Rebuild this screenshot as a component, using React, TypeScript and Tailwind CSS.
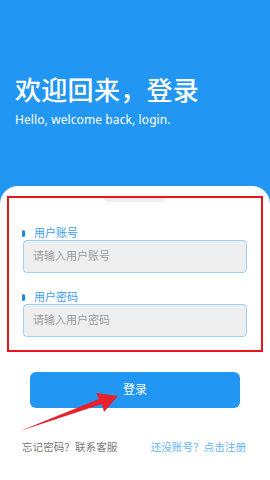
export default function App() {
  return (
    <div
      className="relative w-[270px] h-[480px] bg-[#2196f3] flex flex-col overflow-hidden"
      style={{ fontFamily: '"Noto Sans", "Noto Sans CJK SC", sans-serif' }}
    >
      {/* header */}
      <div className="h-[186px] shrink-0 pt-[77px] px-[15px] text-white">
        <h1 className="text-[26px] leading-[26px] font-medium tracking-[0.3px]">欢迎回来，登录</h1>
        <p className="mt-[9px] text-[12px] leading-[15px] tracking-[0.1px]">Hello, welcome back, login.</p>
      </div>

      {/* card */}
      <div className="relative flex-1 bg-white rounded-t-[18px] pt-[10px] flex flex-col">
        <div className="absolute top-[11px] left-[105px] w-[60px] h-[5px] bg-[#eeeeee] rounded-b-[4px]" />

        <div className="relative mx-[7px] border-2 border-[#e8141c] pt-[28px] pb-[13px] px-[14px]">
          <div className="flex items-center h-[14px]">
            <span className="w-[3px] h-[7px] rounded-full bg-[#1e88e5] ml-[-1px]" />
            <span className="ml-[9px] text-[11px] leading-[14px] text-[#3d9cf2]">用户账号</span>
          </div>
          <div className="h-[33px] rounded-[4px] border border-[#9fd0fa] bg-[#eeeeee] flex items-center px-[9px]">
            <span className="text-[11px] text-[#9e9e9e]">请输入用户账号</span>
          </div>

          <div className="flex items-center h-[14px] mt-[17px]">
            <span className="w-[3px] h-[7px] rounded-full bg-[#1e88e5] ml-[-1px]" />
            <span className="ml-[9px] text-[11px] leading-[14px] text-[#3d9cf2]">用户密码</span>
          </div>
          <div className="h-[33px] rounded-[4px] border border-[#9fd0fa] bg-[#eeeeee] flex items-center px-[9px]">
            <span className="text-[11px] text-[#9e9e9e]">请输入用户密码</span>
          </div>
        </div>

        <div className="mt-[20px] mx-[30px] h-[36px] rounded-[6px] bg-[#2196f3] flex items-center justify-center">
          <span className="text-[12px] text-white">登录</span>
        </div>

        <div className="mt-[32px] pl-[22px] pr-[24px] flex justify-between text-[10.6px] leading-[14px]">
          <span className="text-[#7a7a7a]">忘记密码？联系客服</span>
          <span className="text-[#64b5f6]">还没账号？点击注册</span>
        </div>
      </div>

      {/* annotation arrow */}
      <svg className="absolute left-0 top-0 pointer-events-none" width="270" height="480" viewBox="0 0 270 480">
        <polygon
          points="20,431 99,399 96,393 118,396 104,412 102,404"
          fill="#e8202a"
        />
      </svg>
    </div>
  );
}
